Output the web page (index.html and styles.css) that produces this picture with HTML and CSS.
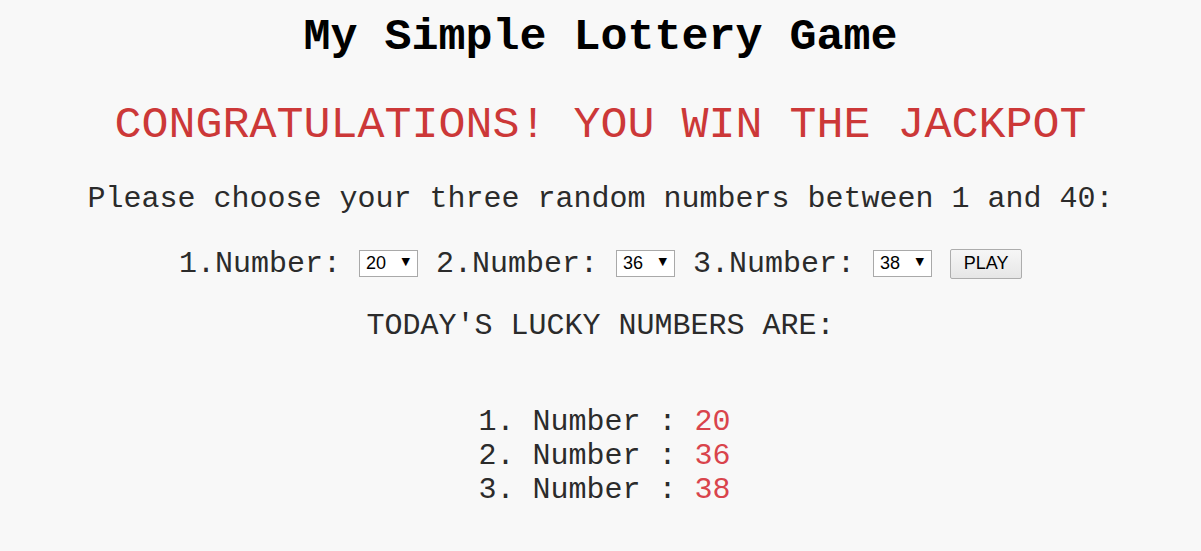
FILE: index.html
```html
<!DOCTYPE html>
<html lang="en">
<head>
<meta charset="utf-8">
<title>My Simple Lottery Game</title>
<link rel="stylesheet" href="styles.css">
</head>
<body>
<main class="game">
  <h1 class="title">My Simple Lottery Game</h1>
  <p class="result">CONGRATULATIONS! YOU WIN THE JACKPOT</p>
  <p class="prompt">Please choose your three random numbers between 1 and 40:</p>
  <form class="picker">1.Number: <span class="sel"><select name="n1"><option>20</option></select></span> 2.Number: <span class="sel"><select name="n2"><option>36</option></select></span> 3.Number: <span class="sel"><select name="n3"><option>38</option></select></span> <button type="button" class="play">PLAY</button></form>
  <p class="lucky-title">TODAY'S LUCKY NUMBERS ARE:</p>
  <ol class="lucky">
    <li>1. Number : <span class="num">20</span></li>
    <li>2. Number : <span class="num">36</span></li>
    <li>3. Number : <span class="num">38</span></li>
  </ol>
</main>
</body>
</html>
```
FILE: styles.css
```css
html, body {
  margin: 0;
  padding: 0;
  background: #f8f8f8;
}
body {
  font-family: "Liberation Mono", "Courier New", monospace;
  color: #2b2b2b;
}
.game {
  text-align: center;
}
.title {
  margin: 12px 0 0;
  font-size: 45px;
  line-height: 52px;
  font-weight: bold;
  color: #000;
}
.result {
  margin: 36px 0 0;
  font-size: 45px;
  line-height: 52px;
  color: #cc3838;
}
.prompt {
  margin: 30px 0 0;
  font-size: 30px;
  line-height: 34px;
}
.picker {
  margin: 28px 0 0;
  height: 34px;
  font-size: 30px;
  line-height: 34px;
}
.sel {
  position: relative;
  display: inline-block;
  vertical-align: 3px;
}
.sel select {
  -webkit-appearance: none;
  appearance: none;
  width: 59px;
  height: 27px;
  box-sizing: border-box;
  border: 1px solid #a9a9a9;
  border-radius: 0;
  background: #fff;
  font-family: "Liberation Sans", Arial, sans-serif;
  font-size: 18px;
  color: #000;
  padding: 0 0 0 6px;
  margin: 0;
}
.sel::after {
  content: "\25BC";
  position: absolute;
  right: 8px;
  top: 50%;
  transform: translateY(-50%);
  font-family: "DejaVu Sans", sans-serif;
  font-size: 11px;
  line-height: 1;
  color: #000;
  pointer-events: none;
}
.play {
  width: 72px;
  height: 30px;
  box-sizing: border-box;
  border: 1px solid #adadad;
  border-radius: 2px;
  background: linear-gradient(#f6f6f6, #e6e6e6);
  font-family: "Liberation Sans", Arial, sans-serif;
  font-size: 18px;
  color: #000;
  padding: 0;
  margin: 0;
  vertical-align: 3px;
}
.lucky-title {
  margin: 31px 0 0;
  font-size: 30px;
  line-height: 34px;
}
.lucky {
  list-style: none;
  margin: 62px 0 0;
  padding: 0 0 0 8px;
  font-size: 30px;
  line-height: 34px;
}
.num {
  color: #d9444c;
}
```
